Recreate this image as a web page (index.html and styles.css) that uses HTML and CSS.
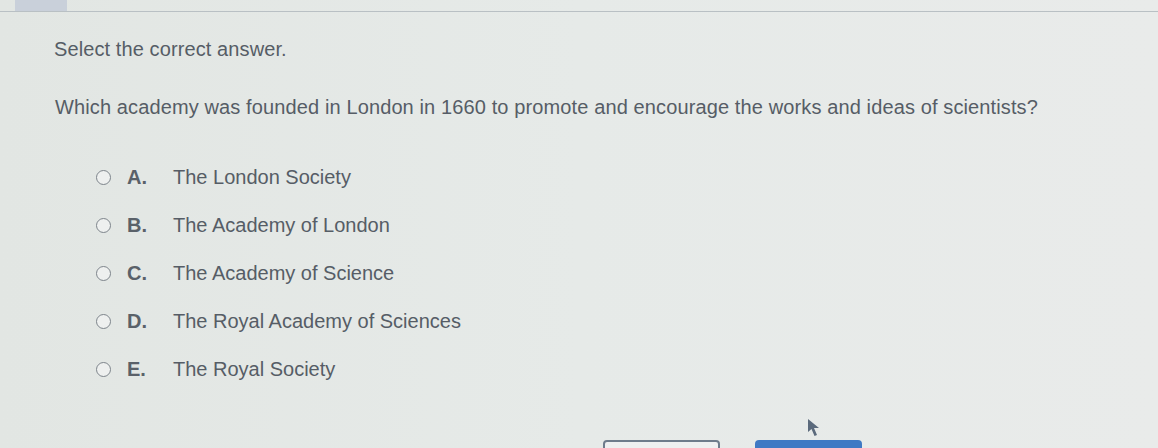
FILE: index.html
```html
<!DOCTYPE html>
<html>
<head>
<meta charset="utf-8">
<link rel="stylesheet" href="styles.css">
</head>
<body>
<div class="topbar"><div class="tab"></div></div>
<main class="content">
  <p class="instr">Select the correct answer.</p>
  <p class="question">Which academy was founded in London in 1660 to promote and encourage the works and ideas of scientists?</p>
  <ul class="options">
    <li class="opt"><span class="radio"></span><span class="letter">A.</span><span class="text">The London Society</span></li>
    <li class="opt"><span class="radio"></span><span class="letter">B.</span><span class="text">The Academy of London</span></li>
    <li class="opt"><span class="radio"></span><span class="letter">C.</span><span class="text">The Academy of Science</span></li>
    <li class="opt"><span class="radio"></span><span class="letter">D.</span><span class="text">The Royal Academy of Sciences</span></li>
    <li class="opt"><span class="radio"></span><span class="letter">E.</span><span class="text">The Royal Society</span></li>
  </ul>
</main>
<div class="buttons">
  <div class="btn btn-outline"></div>
  <div class="btn btn-fill"></div>
</div>
<svg class="cursor" width="16" height="20" viewBox="0 0 16 20"><path d="M1 1 L1 14 L4.5 11 L7.5 18 L10 17 L7 10 L12 10 Z" fill="#5b6a7c"/></svg>
</body>
</html>
```
FILE: styles.css
```css
html, body {
  margin: 0;
  padding: 0;
}
body {
  width: 1158px;
  height: 448px;
  overflow: hidden;
  position: relative;
  background: linear-gradient(90deg, #e2e6e3 0%, #e6eae8 50%, #e9ebea 100%);
  font-family: "Liberation Sans", Arial, sans-serif;
  color: #565d66;
}
.topbar {
  height: 11px;
  border-bottom: 1px solid #b9c0c4;
  padding-left: 15px;
}
.tab {
  width: 52px;
  height: 11px;
  background: #c9d0da;
}
.content {
  padding: 25px 0 0 54px;
}
.instr {
  margin: 0;
  font-size: 20px;
  line-height: 24px;
  letter-spacing: 0.1px;
}
.question {
  margin: 34px 0 0 1px;
  font-size: 20px;
  line-height: 24px;
  letter-spacing: 0.12px;
}
.options {
  list-style: none;
  margin: 0;
  padding: 0 0 0 42px;
}
.opt {
  display: flex;
  align-items: center;
  height: 48px;
  font-size: 20px;
}
.options .opt:first-child {
  margin-top: 34px;
}
.radio {
  width: 15px;
  height: 15px;
  border: 1.5px solid #7d848b;
  border-radius: 50%;
  box-sizing: border-box;
  background: #eef0ef;
  flex: none;
}
.letter {
  margin-left: 16px;
  width: 46px;
  font-weight: bold;
  color: #5a6169;
}
.text {
  color: #565d66;
}
.buttons {
  position: absolute;
  left: 603px;
  top: 440px;
  display: flex;
  gap: 35px;
}
.btn {
  height: 20px;
  border-radius: 4px;
  box-sizing: border-box;
}
.btn-outline {
  width: 117px;
  border: 2px solid #6e7c8c;
  background: #eef0f1;
}
.btn-fill {
  width: 107px;
  background: #3f79c4;
}
.cursor {
  position: absolute;
  left: 807px;
  top: 418px;
}
```
